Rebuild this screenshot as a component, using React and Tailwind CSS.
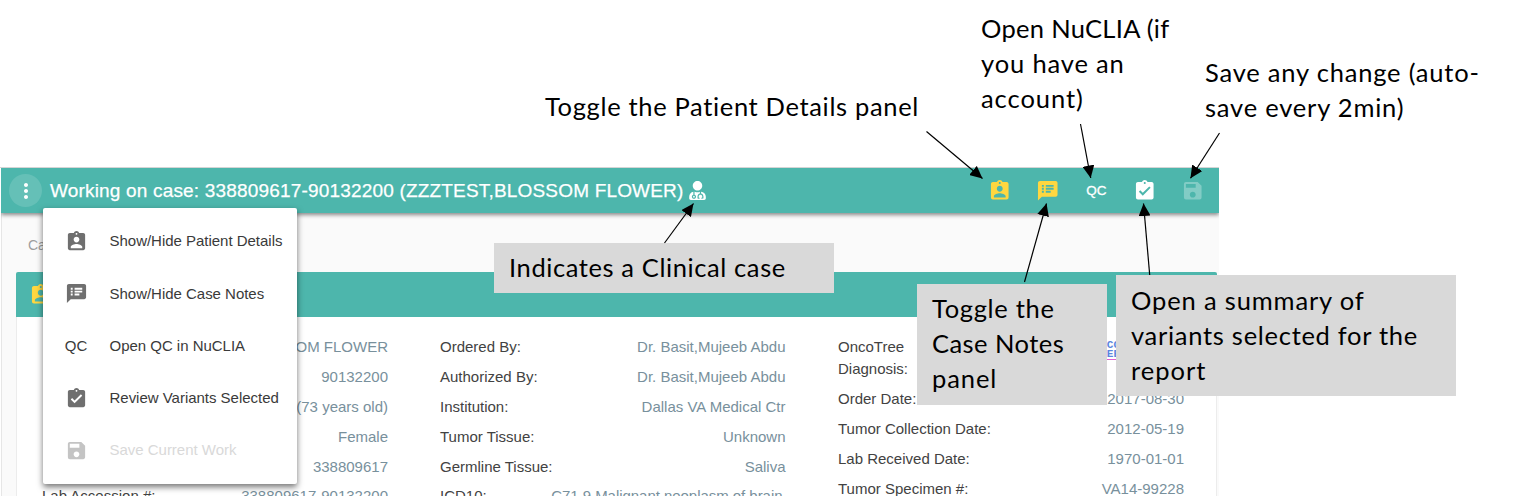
import { MdAssignmentInd, MdSpeakerNotes, MdAssignmentTurnedIn, MdSave, MdMoreVert } from "react-icons/md";
import { FaUserMd } from "react-icons/fa";

function Row({ label, value, className = "h-[29.9px]" }) {
  return (
    <div className={`flex justify-between leading-[22px] whitespace-nowrap ${className}`}>
      <span className="text-[#424242]">{label}</span>
      <span className="text-[#78909c]">{value}</span>
    </div>
  );
}

function MenuItem({ icon, label, disabled }) {
  return (
    <li className={`flex h-[52.2px] items-center ${disabled ? "text-[#d9d9d9]" : "text-[#3a3a3a]"}`}>
      <span className={`flex w-[67px] justify-center ${disabled ? "text-[#c4c4c4]" : "text-[#6f6f6f]"}`}>{icon}</span>
      <span className="tracking-[-0.02px] whitespace-nowrap">{label}</span>
    </li>
  );
}

function Note({ lines, className }) {
  return (
    <div className={`absolute font-['Lato',sans-serif] text-[25.5px] leading-[35px] text-black ${className}`}>
      {lines.map(([text, spacing]) => (
        <div key={text} className={`w-max whitespace-nowrap ${spacing}`}>{text}</div>
      ))}
    </div>
  );
}

const arrows = [
  [926.5, 131.5, 982.5, 178.5],
  [1080.5, 124, 1090.7, 178],
  [1219.5, 133, 1190.5, 178.3],
  [1024.5, 282, 1046.5, 203.5],
  [1149.7, 275, 1143.5, 203.5],
  [664.5, 243, 693.5, 203.5],
];

function Arrows() {
  return (
    <svg className="absolute top-0 left-0" width="1530" height="496" viewBox="0 0 1530 496">
      <defs>
        <marker id="head" markerUnits="userSpaceOnUse" markerWidth="13" markerHeight="12" refX="12.5" refY="6" orient="auto">
          <path d="M0 0L12.5 6L0 12Z" />
        </marker>
      </defs>
      {arrows.map(([x1, y1, x2, y2]) => (
        <line key={x1} x1={x1} y1={y1} x2={x2} y2={y2} stroke="#000" strokeWidth="1.2" markerEnd="url(#head)" />
      ))}
    </svg>
  );
}

export default function App() {
  return (
    <div className="relative h-[496px] w-[1530px] overflow-hidden bg-white pt-[167px] font-['Liberation_Sans',Arial,sans-serif] text-[15px]">
      <div className="flex h-[329px] w-[1219px] flex-col border-t border-[#d5d5d5] pl-px">
        <header className="relative z-10 flex h-[45px] w-[1218px] shrink-0 items-center bg-[#4db6ac] pr-[14px] pl-2 text-white shadow-[0_2px_4px_rgba(0,0,0,0.45)] [clip-path:inset(0_0_-10px_0)]">
          <button className="flex size-[33px] items-center justify-center rounded-full bg-[#65c0b7]">
            <MdMoreVert size={24} />
          </button>
          <h1 className="ml-2 pt-px text-[19px] font-normal tracking-[0.18px] whitespace-nowrap [-webkit-text-stroke:0.25px_white]">
            Working on case: 338809617-90132200 (ZZZTEST,BLOSSOM FLOWER)
          </h1>
          <FaUserMd size={19} className="ml-1" />
          <nav className="ml-auto flex items-center">
            <span className="flex w-[48.5px] justify-center text-[#ffd740]"><MdAssignmentInd size={23.5} /></span>
            <span className="flex w-[48.5px] justify-center text-[#ffd740]"><MdSpeakerNotes size={23.5} /></span>
            <span className="flex w-[48.5px] justify-center pt-px text-[13.5px] [-webkit-text-stroke:0.3px_white]">QC</span>
            <span className="flex w-[48.5px] justify-center"><MdAssignmentTurnedIn size={23.5} /></span>
            <span className="ml-3 flex w-[24px] justify-center text-[#82ccc5]"><MdSave size={23.5} /></span>
          </nav>
        </header>
        <main className="flex w-[1218px] grow flex-col border-l border-[#e6e6e6] bg-[#fafafa] pl-[14px]">
          <div className="h-[59px] pt-[22px] pl-[12px] text-[14px] text-[#9e9e9e]">Ca</div>
          <section className="h-[240px] w-[1201px] rounded-t-[2px] border-x border-[#ececec] bg-white">
            <div className="-mx-px flex h-[45px] items-center rounded-t-[2px] bg-[#4db6ac] pl-[13px] text-[#ffd740]">
              <MdAssignmentInd size={23.5} />
            </div>
            <div className="flex pt-[19px] pl-[25px]">
              <div className="w-[346px]">
                <Row value="OM FLOWER" />
                <Row value="90132200" />
                <Row value="(73 years old)" />
                <Row value="Female" />
                <Row value="338809617" />
                <Row label="Lab Accession #:" value="338809617-90132200" />
              </div>
              <div className="ml-[52px] w-[345.5px]">
                <Row label="Ordered By:" value="Dr. Basit,Mujeeb Abdu" />
                <Row label="Authorized By:" value="Dr. Basit,Mujeeb Abdu" />
                <Row label="Institution:" value="Dallas VA Medical Ctr" />
                <Row label="Tumor Tissue:" value="Unknown" />
                <Row label="Germline Tissue:" value="Saliva" />
                <Row label="ICD10:" value={<span className="pr-[3px] tracking-[-0.04px]">C71.9 Malignant neoplasm of brain</span>} />
              </div>
              <div className="ml-[52.5px] w-[346px]">
                <Row
                  className="h-[52.3px]"
                  label={<>OncoTree<br />Diagnosis:</>}
                  value={<span className="mt-[5px] mr-[64px] block border-b border-[#e060d0] font-['Liberation_Mono',monospace] text-[11px] leading-[9px] font-bold text-[#5b86de]">ONCO<br />TREE</span>}
                />
                <Row label="Order Date:" value="2017-08-30" />
                <Row label="Tumor Collection Date:" value="2012-05-19" />
                <Row label="Lab Received Date:" value="1970-01-01" />
                <Row label="Tumor Specimen #:" value="VA14-99228" />
              </div>
            </div>
          </section>
        </main>
      </div>

      <ul className="absolute top-[208px] left-[42.5px] z-20 h-[276px] w-[254.5px] rounded-[2px] bg-white pt-[7.5px] shadow-[0_3px_6px_rgba(0,0,0,0.55)]">
        <MenuItem icon={<MdAssignmentInd size={23} />} label="Show/Hide Patient Details" />
        <MenuItem icon={<MdSpeakerNotes size={23} />} label="Show/Hide Case Notes" />
        <MenuItem icon={<span className="text-[#3a3a3a]">QC</span>} label="Open QC in NuCLIA" />
        <MenuItem icon={<MdAssignmentTurnedIn size={23} />} label="Review Variants Selected" />
        <MenuItem icon={<MdSave size={23} />} label="Save Current Work" disabled />
      </ul>

      <div className="absolute inset-0 z-30">
        <Note className="top-[89px] left-[545px]" lines={[["Toggle the Patient Details panel", "tracking-[0.66px]"]]} />
        <Note className="top-[11px] left-[981px]" lines={[["Open NuCLIA (if", "tracking-[0.3px]"], ["you have an", "tracking-[0.85px]"], ["account)", "tracking-[0.95px]"]]} />
        <Note className="top-[55px] left-[1205px]" lines={[["Save any change (auto-", "tracking-[0.8px]"], ["save every 2min)", "tracking-[0.8px]"]]} />
        <Note className="top-[243px] left-[494px] h-[50px] w-[340px] bg-[#d9d9d9] pt-[7px] pl-[15px]" lines={[["Indicates a Clinical case", "tracking-[0.6px]"]]} />
        <Note className="top-[284px] left-[917px] h-[121px] w-[190px] bg-[#d9d9d9] pt-[7px] pl-[15px]" lines={[["Toggle the", "tracking-[0.7px]"], ["Case Notes", "tracking-[0.45px]"], ["panel", "tracking-[0.9px]"]]} />
        <Note className="top-[275px] left-[1116px] h-[121px] w-[340px] bg-[#d9d9d9] pt-[8px] pl-[15px]" lines={[["Open a summary of", "tracking-[0.85px]"], ["variants selected for the", "tracking-[0.72px]"], ["report", "tracking-[1px]"]]} />
        <Arrows />
      </div>
    </div>
  );
}
